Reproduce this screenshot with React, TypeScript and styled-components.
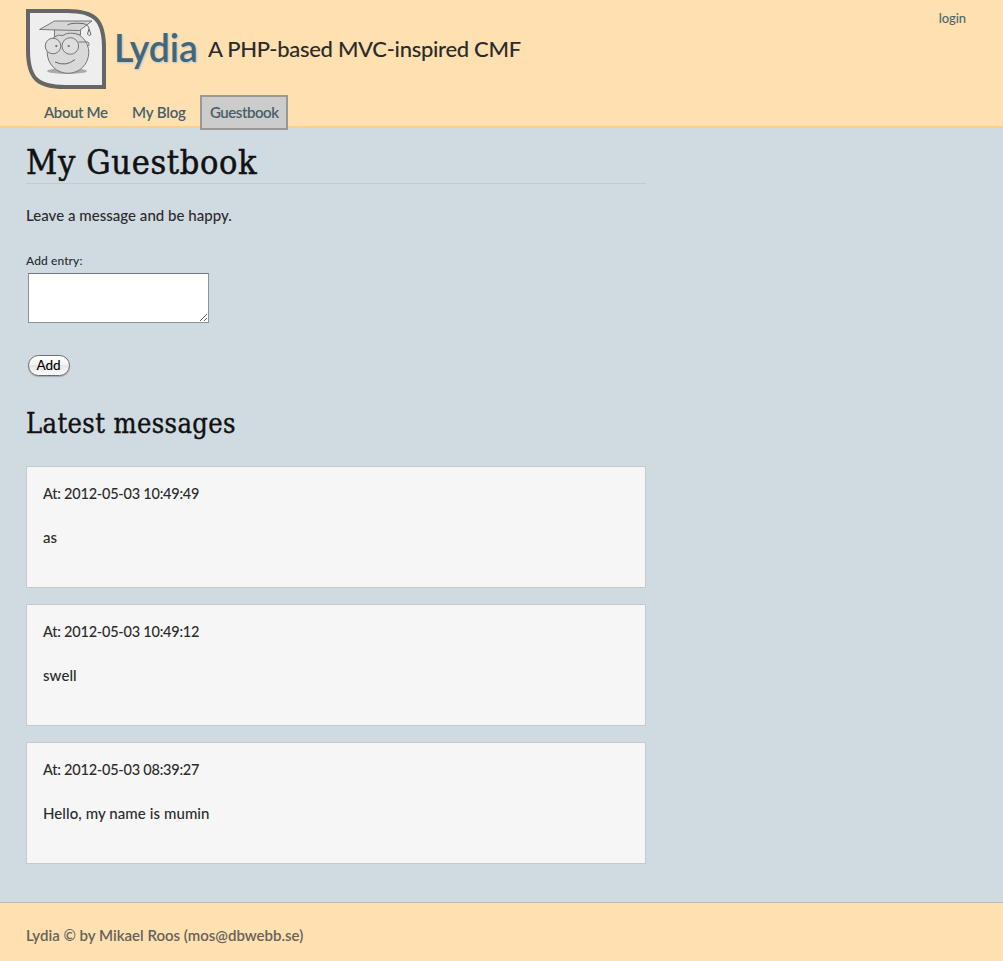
import React from "react";
import styled, { createGlobalStyle } from "styled-components";

const GlobalStyle = createGlobalStyle`
  * { box-sizing: border-box; }
  body {
    margin: 0;
    background: #d0dbe1;
    color: #2b2b2b;
    font: 500 15px/22px Lato, "Liberation Sans", sans-serif;
  }
  h1, h2, p { margin: 0; }
`;

const Page = styled.div`
  display: flex;
  flex-direction: column;
  height: 961px;
  overflow: hidden;
`;

const Header = styled.header`
  display: flex;
  flex-direction: column;
  height: 128px;
  flex: none;
  padding: 9px 37px 0 26px;
  background: #fee0b1;
  border-bottom: 2px solid #ffcf85;
`;

const Banner = styled.div`
  display: flex;
  align-items: flex-start;
  height: 86px;
  flex: none;
`;

const Logo = styled.svg`
  display: block;
  width: 80px;
  height: 80px;
  flex: none;
`;

const SiteTitle = styled.a`
  margin: 15px 0 0 8px;
  width: 94px;
  font-size: 37.500px;
  line-height: 48px;
  font-weight: 600;
  letter-spacing: -0.1px;
  color: #42667a;
  text-shadow: 1px 1px 2px #b5c5cc;
  white-space: nowrap;
`;

const Slogan = styled.span`
  margin-top: 16px;
  font-size: 22px;
  line-height: 48px;
  letter-spacing: -0.3px;
  white-space: nowrap;
`;

const Login = styled.a`
  margin: -2px 0 0 auto;
  font-size: 13px;
  letter-spacing: -0.1px;
  color: #4c666d;
`;

const Nav = styled.nav`
  display: flex;
  padding-left: 8px;
  gap: 4px;
`;

const NavLink = styled.a<{ $width: number; $tracking: number; $current?: boolean }>`
  width: ${(p) => p.$width}px;
  height: 35px;
  flex: none;
  padding-left: 8px;
  border: 2px solid ${(p) => (p.$current ? "#999" : "transparent")};
  background: ${(p) => (p.$current ? "#ccc" : "transparent")};
  color: #466068;
  font-weight: 600;
  line-height: 31px;
  letter-spacing: ${(p) => p.$tracking}px;
  white-space: nowrap;
`;

const Main = styled.main`
  display: flex;
  flex-direction: column;
  align-items: flex-start;
  height: 774px;
  flex: none;
  padding: 14px 0 0 26px;
`;

const Heading = styled.h1`
  width: 620px;
  height: 42px;
  border-bottom: 1px solid #c5cacb;
  color: #111;
  font: 400 34px/41px "DejaVu Serif Condensed", "DejaVu Serif", serif;
  font-stretch: condensed;
  letter-spacing: 0.65px;
  -webkit-text-stroke: 0.5px #111;
`;

const Subheading = styled.h2`
  margin: 27px 0 22px;
  color: #111;
  font: 400 27px/40px "DejaVu Serif Condensed", "DejaVu Serif", serif;
  font-stretch: condensed;
  letter-spacing: 0.4px;
  -webkit-text-stroke: 0.4px #111;
`;

const Intro = styled.p`
  margin-top: 20px;
  letter-spacing: 0.03px;
`;

const Form = styled.form`
  display: flex;
  flex-direction: column;
  align-items: flex-start;
  margin-top: 24px;
`;

const Label = styled.label`
  font-size: 12px;
  line-height: 22px;
  letter-spacing: 0.1px;
`;

const Entry = styled.textarea`
  width: 181px;
  height: 50px;
  margin: 1px 2px 0;
  border: 1px solid #8e9395;
  border-top-color: #737779;
  background: #fff;
`;

const Submit = styled.button`
  width: 42px;
  height: 21px;
  margin: 32px 2px 1px;
  padding: 0 1px 1px 0;
  border: 1px solid #6b6e70;
  border-radius: 11px;
  background: linear-gradient(#fff 0%, #f5f5f5 45%, #e6e6e6 50%, #fff 100%);
  box-shadow: 0 1px 1px #9fa8ad;
  color: #000;
  font: 500 13.500px/18px Lato, sans-serif;
`;

const Messages = styled.div`
  display: flex;
  flex-direction: column;
  gap: 16px;
`;

const Message = styled.article`
  display: flex;
  flex-direction: column;
  gap: 20px;
  width: 620px;
  height: 122px;
  padding: 15px 16px;
  border: 1px solid #c5cacd;
  background: #f6f6f6;
`;

const PostedAt = styled.p`
  font-size: 14.500px;
  line-height: 24px;
  letter-spacing: -0.23px;
`;

const MessageText = styled.p`
  letter-spacing: 0.08px;
`;

const Footer = styled.footer`
  height: 59px;
  flex: none;
  padding: 21px 26px 0;
  border-top: 1px solid #babdb5;
  background: #fee0b1;
  color: #66635a;
  font-weight: 600;
`;

const links = [
  { label: "About Me", width: 84, tracking: -0.4 },
  { label: "My Blog", width: 74, tracking: -0.15 },
  { label: "Guestbook", width: 88, tracking: -0.45, current: true },
];

const messages = [
  { at: "2012-05-03 10:49:49", text: "as" },
  { at: "2012-05-03 10:49:12", text: "swell" },
  { at: "2012-05-03 08:39:27", text: "Hello, my name is mumin" },
];

function Graduate() {
  return (
    <Logo viewBox="0 0 80 80" fill="none">
      <path d="M2 2H41C69 2 78 11 78 39V78H39C11 78 2 69 2 41Z" fill="#eee" stroke="#666" strokeWidth="4" />
      <ellipse cx="41" cy="62" rx="20" ry="3" fill="#aaa" />
      <circle cx="42" cy="43.500" r="20.800" fill="#d9d9d9" stroke="#777" />
      <path d="M28.500 20V28Q32 25 37 26.500Q43 22 54.500 26V21" fill="#d6d6d6" stroke="#777" />
      <path d="M13.500 20.500L28.500 12L66 12L53.500 21.500Z" fill="#d5d5d5" stroke="#777" />
      <path d="M41.500 16Q45 13.500 57 14.500Q63 16 63 20L61.500 25Q63 28 65 25.500L63 20" stroke="#666" />
      <path d="M52.500 33L62 33Q64 35 62.500 37" stroke="#777" />
      <circle cx="27" cy="37" r="7.800" fill="#dedede" stroke="#777" />
      <circle cx="44.300" cy="37" r="8.300" fill="#dedede" stroke="#777" />
      <circle cx="30.300" cy="37" r="1.100" fill="#666" />
      <circle cx="42.700" cy="37" r="1.100" fill="#666" />
      <path d="M29 53Q40 58 49 50.500" stroke="#666" />
    </Logo>
  );
}

export default function App() {
  return (
    <Page>
      <GlobalStyle />
      <Header>
        <Banner>
          <Graduate />
          <SiteTitle>Lydia</SiteTitle>
          <Slogan>A PHP-based MVC-inspired CMF</Slogan>
          <Login>login</Login>
        </Banner>
        <Nav>
          {links.map((link) => (
            <NavLink key={link.label} $width={link.width} $tracking={link.tracking} $current={link.current}>
              {link.label}
            </NavLink>
          ))}
        </Nav>
      </Header>
      <Main>
        <Heading>My Guestbook</Heading>
        <Intro>Leave a message and be happy.</Intro>
        <Form onSubmit={(e) => e.preventDefault()}>
          <Label htmlFor="entry">Add entry:</Label>
          <Entry id="entry" />
          <Submit>Add</Submit>
        </Form>
        <Subheading>Latest messages</Subheading>
        <Messages>
          {messages.map((m) => (
            <Message key={m.at}>
              <PostedAt>At: {m.at}</PostedAt>
              <MessageText>{m.text}</MessageText>
            </Message>
          ))}
        </Messages>
      </Main>
      <Footer>Lydia © by Mikael Roos (mos@dbwebb.se)</Footer>
    </Page>
  );
}
